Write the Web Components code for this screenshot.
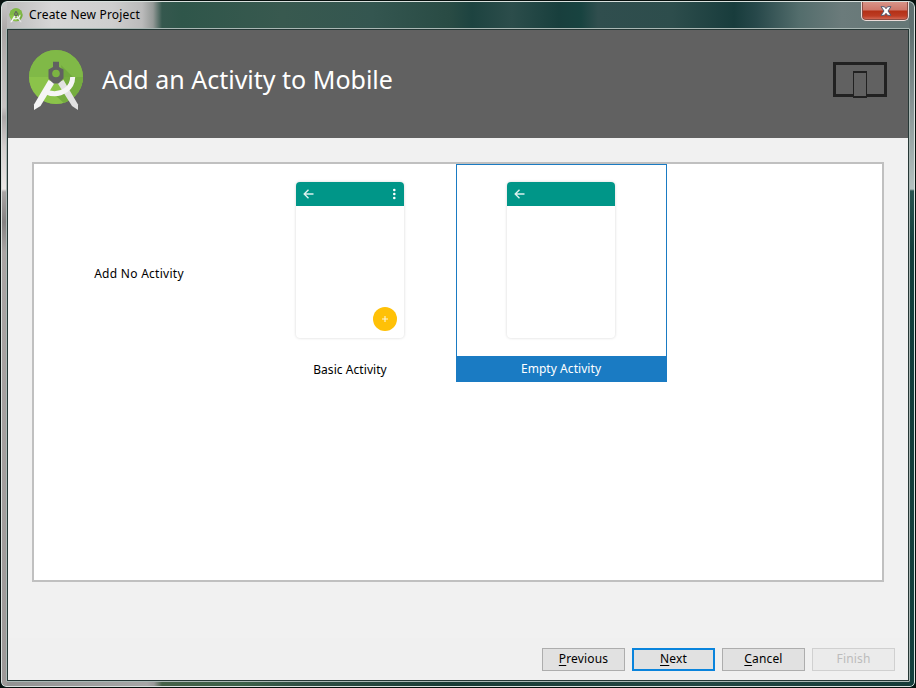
<!DOCTYPE html>
<html lang="en"><head><meta charset="utf-8"><title>Create New Project</title>
<style>
html,body{margin:0;width:916px;height:688px;overflow:hidden;background:#08120f}
body{font-family:"Noto Sans","Open Sans",sans-serif;font-size:12px;color:#000}
</style></head><body>
<wizard-window heading="Create New Project">
  <wizard-header heading="Add an Activity to Mobile"></wizard-header>
  <activity-gallery>
    <activity-card label="Add No Activity" plain></activity-card>
    <activity-card label="Basic Activity"><phone-preview full></phone-preview></activity-card>
    <activity-card label="Empty Activity" selected><phone-preview></phone-preview></activity-card>
  </activity-gallery>
  <wizard-footer>
    <wizard-button key="P" rest="revious"></wizard-button>
    <wizard-button key="N" rest="ext" primary></wizard-button>
    <wizard-button key="C" rest="ancel"></wizard-button>
    <wizard-button rest="Finish" disabled></wizard-button>
  </wizard-footer>
</wizard-window>
<script>
function define(name, render){
  customElements.define(name, class extends HTMLElement{
    constructor(){super();this.attachShadow({mode:'open'});}
    connectedCallback(){this.shadowRoot.innerHTML=render(this);}
  });
}
define('studio-logo',()=>`<style>:host{display:block}svg{display:block;width:100%;height:100%}</style>
<svg viewBox="0 0 56 62"><defs><clipPath id="c"><circle cx="28" cy="28" r="27"/></clipPath></defs>
<circle cx="28" cy="28" r="27" fill="#7cb342"/><g clip-path="url(#c)"><path d="M0 0H56V28H0Z" fill="#80b947"/><path d="M0 28H56V56H0Z" fill="#8bc34a"/><path d="M33 16L45 28H55V56H38L27 46L40 40L35 29Z" fill="#689f38" opacity=".6"/></g>
<path d="M35.500 31L50 55.500V61L44 57L29.500 34Z" fill="#e2e2e2"/><path d="M20.500 31L6 55.500V61L12.500 57L26.500 34Z" fill="#f5f5f5"/>
<path d="M16 42Q28 48 38 41Q44.500 36.500 44.700 28" fill="none" stroke="#f5f5f5" stroke-width="5"/>
<path d="M25 18V12.700H31V18L35.500 20.500V29.500L30.500 34.500H25.500L20.500 29.500V20.500Z" fill="#616161"/><circle cx="28" cy="24.500" r="3.800" fill="#7cb342"/></svg>`);
define('wizard-window',e=>`<style>
:host{display:block;box-sizing:border-box;width:916px;height:688px;border:1px solid #07100e;border-radius:7px 7px 6px 6px;overflow:hidden;background:#153f3d}
.frame{box-sizing:border-box;width:914px;height:686px;border:1px solid #d8e0dd;border-radius:6px 6px 5px 5px;padding:0 4px 4px;overflow:hidden;
background:
linear-gradient(#5f7070 0 30px,#7a8989 80px,#b4c1c0 187px,#285450 189px,#123d3b 250px,#143f3d) right/5px 100% no-repeat,
linear-gradient(#c7c6c6,#aaa7a6 30px,#c8c4c3 105px,#aba7a7 115px,#d5d0cf 145px,#ebe7e5 187px,#aaa6a5 190px,#858282 220px,#aaa5a4 250px,#9d9998) left/5px 100% no-repeat,
linear-gradient(90deg,#929292,#a6a6a6 145px,#999 152px,#456148 160px,#3c6149 240px,#304f44 300px,#183b35 450px,#234743 700px,#153b38) bottom/100% 5px no-repeat,
linear-gradient(90deg,#b9b9b9,#d6d6d6 50px,#cecece 110px,#bbb 140px,#959a98 151px,#35584e 160px,#2f564a 180px,#38594f 280px,#345650 370px,#294b44 448px,#1d4340 470px,#2c4d4b 510px,#183f3d 557px,#184340 579px,#304e4e 596px,#2d4d4c 670px,#183c3c 732px,#27484a 754px,#536d6c 797px,#6b7b7b 840px,#657776)}
header{height:26px;display:flex;align-items:center}
studio-logo{width:14px;height:15px;margin:1px 0 0 3px}
.title{margin-left:6px;color:#000;font-size:12px;line-height:24px;letter-spacing:.2px}
.close{margin:-1px 1px 7px auto;box-sizing:border-box;width:48px;height:20px;padding-left:2px;border:1px solid #eadbd8;border-top:0;border-radius:0 0 5px 5px;background:linear-gradient(#d9978b,#ce776a 9px,#b43016 10px,#bd3c24 15px,#d87461);box-shadow:inset 0 0 0 1px #8d4b42;display:flex;align-items:center;justify-content:center}
.close svg{width:12px;height:10px}
.client{box-sizing:border-box;width:904px;height:654px;border:1px solid #a9b7b4;border-radius:1px}
.inner{box-sizing:border-box;width:902px;height:652px;border:1px solid #253735;background:#f1f1f1;display:flex;flex-direction:column}
</style><div class="frame"><header><studio-logo></studio-logo><span class="title">${e.getAttribute('heading')}</span><span class="close"><svg viewBox="0 0 12 10"><path d="M1 .7H4.400L6 2.700L7.600 .7H11L8 5L11 9.300H7.600L6 7.300L4.400 9.300H1L4 5Z" fill="#fff" stroke="#505970"/></svg></span></header><div class="client"><div class="inner"><slot></slot></div></div></div>`);
define('wizard-header',e=>`<style>
:host{display:flex;height:108px;flex:none;background:#616161;color:#fff;box-sizing:border-box;padding:0 21px 0 20px}
studio-logo{width:56px;height:62px;margin-top:19px}
.t{font-size:25px;line-height:36px;margin:31px auto 0 18px;white-space:nowrap}
.devices{width:54px;height:37px;margin-top:32px}
</style><studio-logo></studio-logo><span class="t">${e.getAttribute('heading')}</span>
<svg class="devices" viewBox="0 0 54 37"><rect x="1.500" y="1.500" width="51" height="32" fill="none" stroke="#212121" stroke-width="3"/><rect x="20.500" y="9.500" width="13" height="26" rx="1" fill="#616161" stroke="#212121"/><path d="M20 10H34M20 35H34" stroke="#212121" stroke-width="2"/></svg>`);
define('activity-gallery',()=>`<style>:host{display:grid;grid-template-columns:repeat(3,211px);grid-auto-rows:218px;align-content:start;box-sizing:border-box;width:852px;height:420px;margin:24px 24px 0;border:2px solid #c0c0c0;background:#fff}</style><slot></slot>`);
define('activity-label',()=>`<style>:host{display:block;text-align:center;font-size:12px;line-height:26px;white-space:nowrap}</style><slot></slot>`);
define('activity-card',e=>`<style>
  :host{display:flex;flex-direction:column;box-sizing:border-box;width:211px;height:218px}
  :host([plain]){justify-content:center}
  :host([selected]){border:1px solid #1a7bc3}
  .art{height:192px;box-sizing:border-box;padding:18px 52px 0 51px}
  :host([selected]) .art{height:191px;padding:17px 51px 0 50px}
  :host([plain]) .art{display:none}
  activity-label{padding:1px 1px 0 0;height:25px;letter-spacing:.06px}
  :host([plain]) activity-label{letter-spacing:.28px}
  :host([selected]) activity-label{padding:0 1px 0 0;background:#1a7bc3;color:#fff}
  </style><div class="art"><slot></slot></div><activity-label>${e.getAttribute('label')}</activity-label>`);
define('phone-preview',e=>`<style>
:host{display:flex;flex-direction:column;box-sizing:border-box;width:108px;height:156px;border-radius:4px;background:#fff;box-shadow:0 0 3px #0000002b;overflow:hidden}
.bar{height:24px;background:#009688;display:flex;flex:none;justify-content:space-between}
.bar svg{height:24px}.fab{margin:auto 7px 7px auto;width:24px;height:24px}
</style><div class="bar"><svg width="24" viewBox="0 0 24 24"><path d="M17.500 12H8.500M12.500 7.700L8.200 12L12.500 16.300" fill="none" stroke="#fff" stroke-opacity=".85" stroke-width="1.400"/></svg>
${e.hasAttribute('full')?'<svg width="20" viewBox="0 0 20 24"><g fill="#fff"><circle cx="10.300" cy="8" r="1.300"/><circle cx="10.300" cy="12" r="1.300"/><circle cx="10.300" cy="16" r="1.300"/></g></svg>':''}</div>
${e.hasAttribute('full')?'<svg class="fab" viewBox="0 0 24 24"><circle cx="12" cy="12" r="12" fill="#ffc107"/><path d="M9 12H15M12 9V15" stroke="#fff" stroke-opacity=".85" stroke-width="1.100"/></svg>':''}`);
define('wizard-footer',()=>`<style>:host{display:flex;justify-content:flex-end;box-sizing:border-box;gap:7px;flex:none;height:42px;margin-top:56px;padding:10px 13px 0;background:#f0f0f0}</style><slot></slot>`);
define('wizard-button',e=>`<style>
:host{display:block;box-sizing:border-box;width:83px;height:23px;border:1px solid #adadad;background:#e1e1e1;text-align:center;font-size:12px;line-height:20px;letter-spacing:.15px}
:host([primary]){border:2px solid #0a84dc;line-height:18px}
:host([disabled]){border-color:#d0d0d0;background:#ebebeb;color:#bcbcbc}
u{text-decoration-thickness:1px;text-underline-offset:2px;text-decoration-skip-ink:none}
</style><span>${e.hasAttribute('key')?`<u>${e.getAttribute('key')}</u>`:''}${e.getAttribute('rest')}</span>`);
</script></body></html>
